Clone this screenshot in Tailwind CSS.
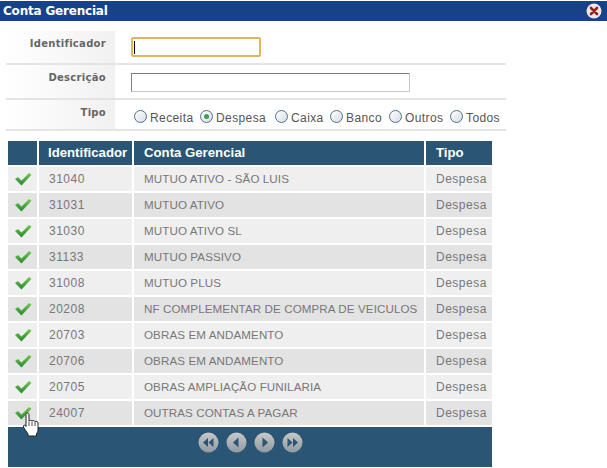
<!DOCTYPE html>
<html lang="en">
<head>
    <meta charset="UTF-8">
    <title>Conta Gerencial</title>
    <script src="https://cdn.jsdelivr.net/npm/@tailwindcss/browser@4"></script>
</head>
<body class="bg-white w-[607px] h-[468px] overflow-hidden relative font-['Liberation_Sans',sans-serif]">
    <!-- Title bar -->
    <div class="mt-px h-5 bg-[#17428a] flex items-center justify-between pl-[3px] pr-[5px]">
        <span class="font-['DejaVu_Sans',sans-serif] font-bold text-[12px] tracking-[-0.2px] text-white">Conta Gerencial</span>
        <svg width="16" height="16" viewBox="0 0 16 16">
            <circle cx="8" cy="8" r="7.5" fill="#eee8e4"/>
            <path d="M5 5 L11 11 M11 5 L5 11" stroke="#9a2020" stroke-width="2.6" stroke-linecap="round"/>
        </svg>
    </div>

    <!-- Form -->
    <div class="mt-[10px] ml-[6px] w-[500px] font-['DejaVu_Sans',sans-serif]">
        <div class="flex h-[34px] border-b-2 border-[#e4e4e4]">
            <div class="w-[109px] bg-gradient-to-r from-white to-[#f1f1f1] text-right pr-[9px] pt-[5px] text-[10px] font-bold text-[#666] tracking-[0.3px]">Identificador</div>
            <div class="pl-[16px] pt-[6px]">
                <div class="w-[130px] h-[20px] bg-white border-2 border-[#e2b45e] rounded-[2px] flex items-center pl-px"><div class="w-px h-[13px] bg-black"></div></div>
            </div>
        </div>
        <div class="flex h-[35px] border-b-2 border-[#e4e4e4]">
            <div class="w-[109px] bg-gradient-to-r from-white to-[#f1f1f1] text-right pr-[9px] pt-[5px] text-[10px] font-bold text-[#666] tracking-[0.3px]">Descrição</div>
            <div class="pl-[16px] pt-[8px]">
                <div class="w-[279px] h-[19px] bg-white border border-[#c8c8c8] border-t-[#808080] border-l-[#808080]"></div>
            </div>
        </div>
        <div class="flex h-[31px] border-b-2 border-[#e4e4e4]">
            <div class="w-[109px] bg-gradient-to-r from-white to-[#f1f1f1] text-right pr-[9px] pt-[5px] text-[10px] font-bold text-[#666] tracking-[0.3px]">Tipo</div>
            <div class="pl-[19px] pt-[8px] flex items-center h-[28px] font-['Liberation_Sans',sans-serif] text-[12px] text-[#555] tracking-[0.4px]">
                <span class="-translate-y-[2px] w-[13px] h-[13px] rounded-full border border-[#4f6f8f] bg-gradient-to-br from-white to-[#d8dde2]"></span><span class="ml-[3px] w-[50px]">Receita</span>
                <span class="-translate-y-[2px] w-[13px] h-[13px] rounded-full border border-[#4f6f8f] bg-gradient-to-br from-white to-[#d8dde2] flex items-center justify-center"><span class="w-[5px] h-[5px] rounded-full bg-[#3f9f4f]"></span></span><span class="ml-[3px] w-[59px]">Despesa</span>
                <span class="-translate-y-[2px] w-[13px] h-[13px] rounded-full border border-[#4f6f8f] bg-gradient-to-br from-white to-[#d8dde2]"></span><span class="ml-[3px] w-[39px]">Caixa</span>
                <span class="-translate-y-[2px] w-[13px] h-[13px] rounded-full border border-[#4f6f8f] bg-gradient-to-br from-white to-[#d8dde2]"></span><span class="ml-[3px] w-[43px]">Banco</span>
                <span class="-translate-y-[2px] w-[13px] h-[13px] rounded-full border border-[#4f6f8f] bg-gradient-to-br from-white to-[#d8dde2]"></span><span class="ml-[3px] w-[45px]">Outros</span>
                <span class="-translate-y-[2px] w-[13px] h-[13px] rounded-full border border-[#4f6f8f] bg-gradient-to-br from-white to-[#d8dde2]"></span><span class="ml-[3px]">Todos</span>
            </div>
        </div>
    </div>

    <!-- Grid -->
    <div id="grid" class="mt-[10px] ml-[8px] w-[484px] grid grid-cols-[29px_93px_290px_66px] gap-[2px]">
        <div class="h-6 bg-[#2a5574]"></div>
        <div class="h-6 bg-[#2a5574] text-white font-bold text-[13.2px] leading-6 pl-[9px] whitespace-nowrap">Identificador</div>
        <div class="h-6 bg-[#2a5574] text-white font-bold text-[13.2px] leading-6 pl-[10px]">Conta Gerencial</div>
        <div class="h-6 bg-[#2a5574] text-white font-bold text-[13.2px] leading-6 pl-[10px]">Tipo</div>
    </div>
    <div class="mt-[2px] ml-[8px] w-[484px] h-[40px] bg-[#2a5574] flex justify-center items-start gap-[7px] pt-[5px]">
        <svg width="21" height="21" viewBox="0 0 21 21"><defs><linearGradient id="g" x1="0" y1="0" x2="0" y2="1"><stop offset="0" stop-color="#c8c8c8"/><stop offset="1" stop-color="#8f9aa2"/></linearGradient></defs><circle cx="10.5" cy="10.5" r="10" fill="url(#g)"/><path d="M10 6v9l-5-4.5zM15.5 6v9l-5-4.5z" fill="#2a5574"/></svg>
        <svg width="21" height="21" viewBox="0 0 21 21"><circle cx="10.5" cy="10.5" r="10" fill="url(#g)"/><path d="M12.5 5.5v10l-5.5-5z" fill="#2a5574"/></svg>
        <svg width="21" height="21" viewBox="0 0 21 21"><circle cx="10.5" cy="10.5" r="10" fill="url(#g)"/><path d="M8.5 5.5v10l5.5-5z" fill="#2a5574"/></svg>
        <svg width="21" height="21" viewBox="0 0 21 21"><circle cx="10.5" cy="10.5" r="10" fill="url(#g)"/><path d="M5.5 6v9l5-4.5zM11 6v9l5-4.5z" fill="#2a5574"/></svg>
    </div>

    <!-- Hand cursor over the last row -->
    <svg class="absolute left-[22px] top-[412px]" width="18" height="26" viewBox="0 0 18 26">
        <path d="M4 2.500c0-2 3-2 3 0V9c1-1 2.500-.8 3 0 1-.8 2.500-.5 3 .5 1-.5 3-.2 3 1.500v6c0 2-.5 3-1.500 5v2H6v-2c-1-2-3-4-4.500-7-.7-1.500 1-2.500 2-1.500L4 14.500z" fill="#fff" stroke="#222" stroke-width="1"/>
        <path d="M7 9.500V14M10 9.500V14M13 10V14" stroke="#222" stroke-width=".8"/>
    </svg>

    <script>
        const rows = [
            ['31040', 'MUTUO ATIVO - SÃO LUIS'],
            ['31031', 'MUTUO ATIVO'],
            ['31030', 'MUTUO ATIVO SL'],
            ['31133', 'MUTUO PASSIVO'],
            ['31008', 'MUTUO PLUS'],
            ['20208', 'NF COMPLEMENTAR DE COMPRA DE VEICULOS'],
            ['20703', 'OBRAS EM ANDAMENTO'],
            ['20706', 'OBRAS EM ANDAMENTO'],
            ['20705', 'OBRAS AMPLIAÇÃO FUNILARIA'],
            ['24007', 'OUTRAS CONTAS A PAGAR']
        ];
        const check = '<svg width="18" height="14" viewBox="0 0 18 14"><defs><linearGradient id="c" x1="0" y1="0" x2="0" y2="1"><stop offset="0" stop-color="#74c850"/><stop offset="1" stop-color="#25882f"/></linearGradient></defs><path d="M1 7 L4 5 L7.5 8.500 L15 1 L17.500 2.800 L7.500 13.500 Z" fill="url(#c)"/></svg>';
        const shades = ['bg-[#efefef]', 'bg-[#e3e3e3]'];
        let html = '';
        rows.forEach((r, i) => {
            const bg = shades[i % 2];
            const text = 'h-6 leading-6 text-[#777] whitespace-nowrap pl-[10px] ';
            html += `<div class="h-6 flex items-center justify-center pl-px ${bg}">${check}</div>`;
            html += `<div class="${text} text-[12px] tracking-[0.5px] ${bg}">${r[0]}</div>`;
            html += `<div class="${text} text-[11.6px] tracking-[0.1px] ${bg}">${r[1]}</div>`;
            html += `<div class="${text} text-[12px] tracking-[0.5px] ${bg}">Despesa</div>`;
        });
        document.getElementById('grid').insertAdjacentHTML('beforeend', html);
    </script>
</body>
</html>
